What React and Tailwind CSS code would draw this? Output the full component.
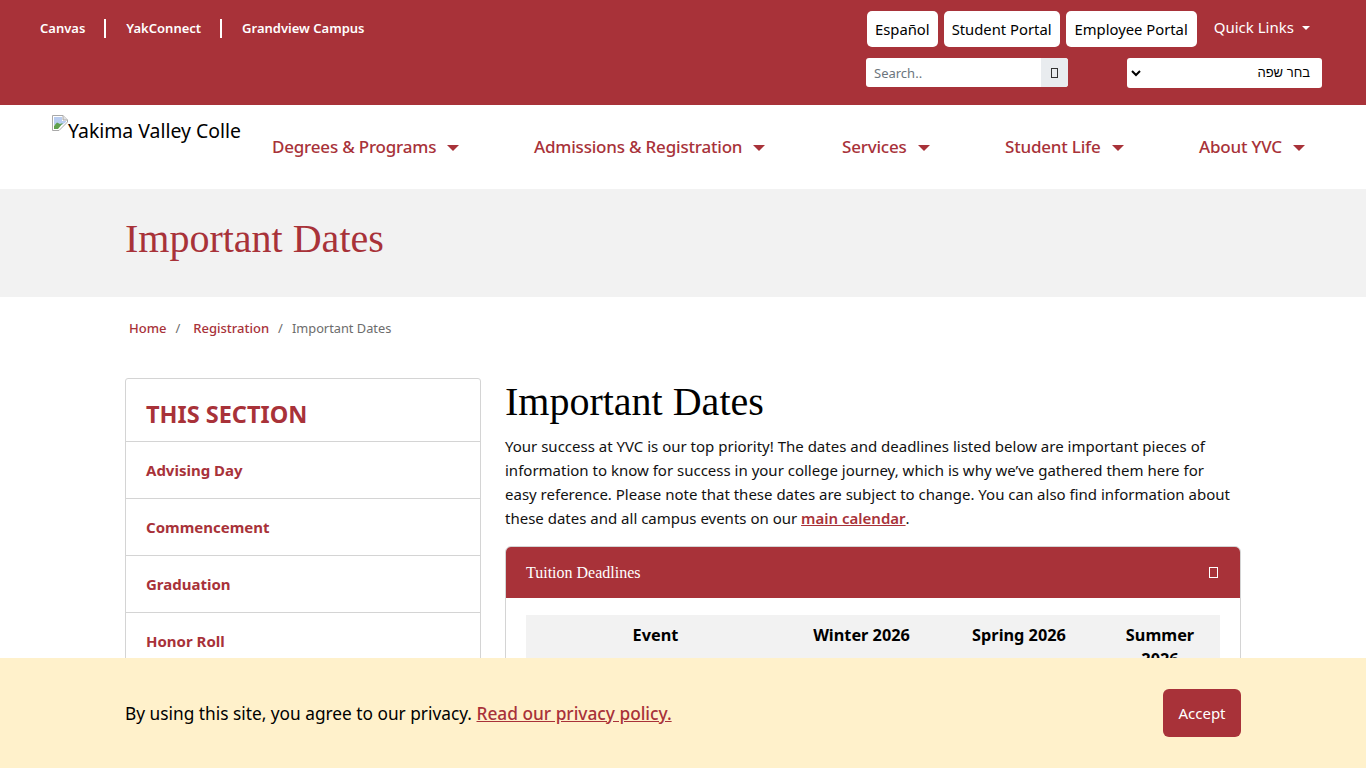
const sans = "font-['Noto_Sans','Liberation_Sans',sans-serif]"

function Caret({ className }) {
  return <span className={`inline-block w-0 h-0 border-x-transparent ${className}`} />
}

function Tofu({ className }) {
  return <span className={`inline-block border ${className}`} />
}

function BrokenImage() {
  return (
    <svg width="16" height="16" viewBox="0 0 16 16" className="shrink-0">
      <path d="M0.5 0.5H11L15.5 5V7L7 15.5H0.5Z" fill="#fff" stroke="#a9a9a9" />
      <path d="M11 0.5V5H15.5" fill="#e4e4e4" stroke="#a9a9a9" />
      <path d="M2 2H10V6H14V7L10 10H2Z" fill="#b9cdf0" />
      <path d="M2 14V11L5 7.5L8 9L11 8L6 14Z" fill="#5fa04e" />
    </svg>
  )
}

function NavItem({ label, className }) {
  return (
    <a className={`flex items-center whitespace-nowrap text-[#a83239] text-[17px] tracking-[-0.2px] font-medium ${className}`}>
      {label}
      <Caret className="ml-[11px] mt-[2px] border-x-[6px] border-t-[6px] border-t-[#a83239]" />
    </a>
  )
}

const sideLinks = ['Advising Day', 'Commencement', 'Graduation', 'Honor Roll', 'Important Dates']

function App() {
  return (
    <div className={`h-screen overflow-hidden bg-white text-black ${sans}`}>
      <header className="h-[105px] bg-[#a83239] flex justify-between">
        <div className="pl-[40px] pt-[19px] flex items-center h-[38px] text-white text-[13px] font-semibold">
          <a>Canvas</a>
          <span className="w-[2px] h-[19px] bg-white ml-[19px] mr-[20px]" />
          <a>YakConnect</a>
          <span className="w-[2px] h-[19px] bg-white ml-[19px] mr-[20px]" />
          <a>Grandview Campus</a>
        </div>
        <div className="w-[500px] pt-[11px]">
          <div className="flex items-start gap-[6px] pl-[1px]">
            <a className="h-[36px] px-[8px] flex items-center bg-white rounded-[5px] text-[14.8px]">Español</a>
            <a className="h-[36px] px-[8px] flex items-center bg-white rounded-[5px] text-[14.8px]">Student Portal</a>
            <a className="h-[36px] px-[9px] flex items-center bg-white rounded-[5px] text-[14.8px]">Employee Portal</a>
            <a className="ml-[11px] h-[33px] flex items-center text-white text-[15px]">
              Quick Links
              <Caret className="ml-[8px] border-x-[4px] border-t-[4px] border-t-white" />
            </a>
          </div>
          <div className="flex items-start mt-[11px]">
            <div className="w-[202px] h-[29px] flex bg-white rounded-[3px] overflow-hidden">
              <span className="flex-1 pl-[8px] pt-[2px] flex items-center text-[13px] text-[#6c757d]">Search..</span>
              <span className="w-[27px] bg-[#e9ecef] flex items-center justify-center">
                <Tofu className="w-[7px] h-[10px] border-[#333]" />
              </span>
            </div>
            <div className="ml-[59px] w-[195px] h-[30px] bg-white rounded-[3px] flex items-center justify-between pl-[4px] pr-[12px]">
              <svg width="10" height="8" viewBox="0 0 10 8"><path d="M1 2L5 6L9 2" fill="none" stroke="#000" strokeWidth="2" /></svg>
              <span dir="rtl" className="text-[13px] font-['Liberation_Sans',sans-serif]">בחר שפה</span>
            </div>
          </div>
        </div>
      </header>

      <nav className="h-[84px] flex items-start">
        <div className="ml-[52px] mt-[10px] w-[189px] h-[32px] overflow-hidden flex items-start whitespace-nowrap text-[19.4px] leading-[32px]">
          <BrokenImage />
          <span>Yakima Valley College</span>
        </div>
        <div className="ml-[31px] mt-[29px] h-[26px] flex">
          <NavItem label="Degrees & Programs" className="w-[262px]" />
          <NavItem label="Admissions & Registration" className="w-[308px]" />
          <NavItem label="Services" className="w-[163px]" />
          <NavItem label="Student Life" className="w-[194px]" />
          <NavItem label="About YVC" className="w-[110px]" />
        </div>
      </nav>

      <div className="h-[108px] bg-[#f2f2f2] pl-[125px] pb-[8px] flex items-center">
        <h1 className="font-['Liberation_Serif',serif] text-[40px] text-[#a83239]">Important Dates</h1>
      </div>

      <div className="pl-[129px] h-[81px] pt-[21px] flex items-start text-[13px] leading-[20px] font-medium text-[#a83239]">
        <a>Home</a>
        <span className="ml-[9px] mr-[8px] font-normal text-[#6c6c6c]">/</span>
        <a className="ml-[5px]">Registration</a>
        <span className="mx-[9px] font-normal text-[#6c6c6c]">/</span>
        <span className="font-normal text-[12.8px] text-[#6c6c6c]">Important Dates</span>
      </div>

      <div className="pl-[125px] flex items-start">
        <aside className="w-[356px] shrink-0 border border-[#d4d4d4] rounded-[3px]">
          <h2 className="h-[62px] pl-[20px] pt-[17px] text-[23.5px] leading-[36px] font-bold text-[#a83239]">THIS SECTION</h2>
          {sideLinks.map((link) => (
            <a key={link} className="block h-[57px] border-t border-[#d4d4d4] pl-[20px] pt-[16px] text-[15px] leading-[24px] font-bold text-[#a83239]">
              {link}
            </a>
          ))}
        </aside>

        <main className="ml-[24px] w-[736px] shrink-0">
          <h1 className="font-['Liberation_Serif',serif] text-[40px] leading-[48px]">Important Dates</h1>
          <p className="mt-[8px] pr-[10px] text-[15px] leading-[24px] text-[#111]">
            Your success at YVC is our top priority! The dates and deadlines listed below are important pieces of information to know for success in your college journey, which is why we’ve gathered them here for easy reference. Please note that these dates are subject to change. You can also find information about these dates and all campus events on our{' '}
            <a className="underline font-semibold text-[#a83239]">main calendar</a>.
          </p>
          <div className="mt-[16px] border border-[#d4d4d4] rounded-[6px] overflow-hidden">
            <div className="h-[51px] bg-[#a83239] flex items-center justify-between pl-[20px] pr-[22px] font-['Liberation_Serif',serif] text-[16px] text-white">
              Tuition Deadlines
              <Tofu className="w-[9px] h-[11px] border-white" />
            </div>
            <div className="px-[20px] pt-[17px] pb-[20px]">
              <div className="bg-[#f2f2f2] grid grid-cols-[259px_153px_162px_120px] text-center text-[16.3px] leading-[24px] font-bold pt-[8px] pb-[8px]">
                <span>Event</span>
                <span>Winter 2026</span>
                <span>Spring 2026</span>
                <span className="px-[12px]">Summer 2026</span>
              </div>
            </div>
          </div>
        </main>
      </div>

      <div className="fixed inset-x-0 bottom-0 h-[110px] bg-[#fff1cb] pl-[125px] pr-[125px] flex items-center justify-between">
        <p className="pt-[2px] text-[17.3px]">
          By using this site, you agree to our privacy.{' '}
          <a className="underline font-medium text-[#a83239]">Read our privacy policy.</a>
        </p>
        <button className="w-[78px] h-[48px] bg-[#a83239] rounded-[6px] text-white text-[15px]">Accept</button>
      </div>
    </div>
  )
}

export default App
